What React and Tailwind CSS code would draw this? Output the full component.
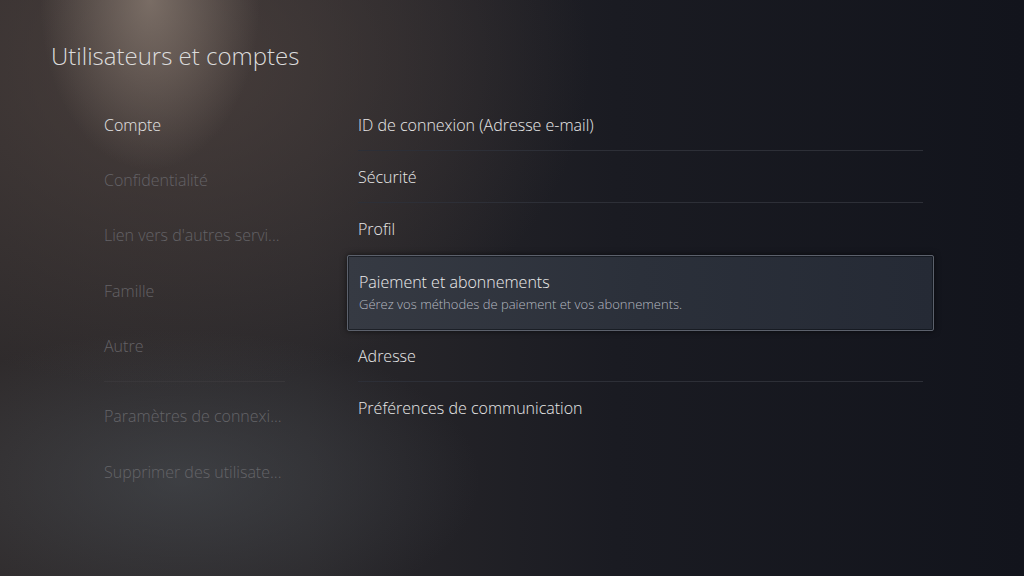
const leftItems = [
  { label: 'Compte', active: true },
  { label: 'Confidentialité' },
  { label: "Lien vers d'autres servi..." },
  { label: 'Famille' },
  { label: 'Autre' },
]

const leftItemsBottom = ['Paramètres de connexi...', 'Supprimer des utilisate...']

const rows = [
  { label: 'ID de connexion (Adresse e-mail)' },
  { label: 'Sécurité' },
  { label: 'Profil' },
  { label: 'Paiement et abonnements', hint: 'Gérez vos méthodes de paiement et vos abonnements.', focused: true },
  { label: 'Adresse' },
  { label: 'Préférences de communication' },
]

const App = () => {
  return (
    <div
      className="relative w-[1024px] h-[576px] overflow-hidden text-[#e6e6e6] bg-[#15161e] bg-[radial-gradient(ellipse_110px_170px_at_150px_0px,rgba(140,126,116,0.75),transparent),radial-gradient(ellipse_420px_330px_at_170px_60px,rgba(80,68,64,0.75),transparent),radial-gradient(ellipse_300px_150px_at_180px_480px,rgba(78,84,90,0.5),transparent),linear-gradient(90deg,#2f2b2c_0%,#2a282b_30%,#1a1b22_60%,#12141c_100%)]"
      style={{ fontFamily: '"Open Sans", sans-serif' }}
    >
      <h1 className="pl-[51px] pt-[41px] text-[24px] font-light leading-[30px] text-[#dcdcdc]">
        Utilisateurs et comptes
      </h1>

      <div className="flex mt-[26px]">
        {/* Left menu */}
        <div className="ml-[104px] w-[181px] flex flex-col">
          {leftItems.map((item, i) => (
            <div
              key={i}
              className={`h-[55.4px] flex items-center text-[16px] font-light whitespace-nowrap ${item.active ? 'text-[#e4e4e4]' : 'text-[#646266]'}`}
            >
              {item.label}
            </div>
          ))}
          <div className="mt-[7px] border-t border-[#39373a]" />
          {leftItemsBottom.map((label, i) => (
            <div key={i} className={`h-[56px] flex items-center text-[16px] font-light whitespace-nowrap text-[#646468] ${i === 0 ? 'mt-[6px]' : ''}`}>
              {label}
            </div>
          ))}
        </div>

        {/* Right list */}
        <div className="ml-[62px] pt-[2px] w-[587px] flex flex-col">
          {rows.map((row, i) => {
            if (row.focused) {
              return (
                <div
                  key={i}
                  className="h-[76px] -my-[0.5px] px-[11px] flex flex-col justify-center bg-[linear-gradient(90deg,#363a43,#2b303a_50%,#252a35)] border border-[#5c616c] rounded-[2px] shadow-[inset_0_0_0_1px_rgba(10,12,18,0.55),0_0_6px_rgba(0,0,0,0.6)]"
                >
                  <div className="text-[16px] font-light text-[#ececec] leading-[20px]">{row.label}</div>
                  <div className="mt-[4px] text-[13px] font-light text-[#b4b8c0] leading-[17px]">{row.hint}</div>
                </div>
              )
            }
            const next = rows[i + 1]
            const divider = next && !next.focused
            return (
              <div key={i} className="mx-[11px]">
                <div className={`h-[52px] flex items-center text-[16px] font-light text-[#e8e8e8] ${divider ? 'border-b border-[#2d2f37]' : ''}`}>
                  {row.label}
                </div>
              </div>
            )
          })}
        </div>
      </div>
    </div>
  )
}

export default App
